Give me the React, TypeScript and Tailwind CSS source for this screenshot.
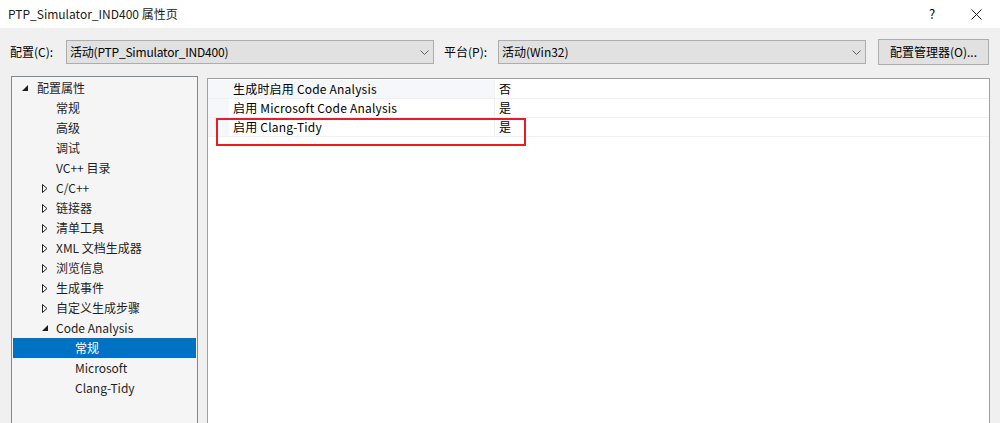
import React from "react";

const font = { fontFamily: '"Noto Sans CJK SC", "Noto Sans", sans-serif' };

function Expanded() {
  return (
    <svg width="7" height="7" viewBox="0 0 7 7" className="shrink-0">
      <polygon points="6,0 6,6 0,6" fill="#1e1e1e" />
    </svg>
  );
}
function Collapsed() {
  return (
    <svg width="6" height="9" viewBox="0 0 6 9" className="shrink-0">
      <polygon points="0.5,0.5 5,4.5 0.5,8.5" fill="none" stroke="#1e1e1e" strokeWidth="1" />
    </svg>
  );
}
function Chevron() {
  return (
    <svg width="9" height="5" viewBox="0 0 9 5">
      <polyline points="0.5,0.5 4.5,4.5 8.5,0.5" fill="none" stroke="#606060" strokeWidth="1" />
    </svg>
  );
}

type Node = { label: string; level: number; icon?: "e" | "c"; selected?: boolean };
const tree: Node[] = [
  { label: "配置属性", level: 0, icon: "e" },
  { label: "常规", level: 1 },
  { label: "高级", level: 1 },
  { label: "调试", level: 1 },
  { label: "VC++ 目录", level: 1 },
  { label: "C/C++", level: 1, icon: "c" },
  { label: "链接器", level: 1, icon: "c" },
  { label: "清单工具", level: 1, icon: "c" },
  { label: "XML 文档生成器", level: 1, icon: "c" },
  { label: "浏览信息", level: 1, icon: "c" },
  { label: "生成事件", level: 1, icon: "c" },
  { label: "自定义生成步骤", level: 1, icon: "c" },
  { label: "Code Analysis", level: 1, icon: "e" },
  { label: "常规", level: 2, selected: true },
  { label: "Microsoft", level: 2 },
  { label: "Clang-Tidy", level: 2 },
];

const rows = [
  { k: "生成时启用 Code Analysis", v: "否", hl: true },
  { k: "启用 Microsoft Code Analysis", v: "是" },
  { k: "启用 Clang-Tidy", v: "是" },
];

export default function App() {
  return (
    <div className="w-[1000px] h-[423px] overflow-hidden flex flex-col text-[12px] text-black bg-[#f0f0f0]" style={font}>
      {/* title bar */}
      <div className="h-[28px] bg-white flex items-center shrink-0">
        <div className="pl-[8px] text-[12px] leading-[14px] text-[#1a1a1a]">PTP_Simulator_IND400 属性页</div>
        <div className="ml-auto flex items-center">
          <div className="w-[12px] text-center text-[13px] leading-[14px] mr-[33px]">?</div>
          <svg width="11" height="11" viewBox="0 0 11 11" className="mr-[18px]">
            <path d="M0.5 0.5 L10.5 10.5 M10.5 0.5 L0.5 10.5" stroke="#1a1a1a" strokeWidth="1" />
          </svg>
        </div>
      </div>

      {/* config row */}
      <div className="flex items-center h-[26px] mt-[11px] shrink-0">
        <div className="pl-[10px] w-[66px] leading-[14px]">配置(C):</div>
        <div className="w-[368px] h-[24px] bg-[#e1e1e1] border border-[#adadad] flex items-center pl-[3px] pr-[4px]">
          <span className="leading-[14px] tracking-[-0.2px]">活动(PTP_Simulator_IND400)</span>
          <span className="ml-auto"><Chevron /></span>
        </div>
        <div className="pl-[10px] w-[64px] leading-[14px]">平台(P):</div>
        <div className="w-[368px] h-[24px] bg-[#e1e1e1] border border-[#adadad] flex items-center pl-[3px] pr-[4px]">
          <span className="leading-[14px]">活动(Win32)</span>
          <span className="ml-auto"><Chevron /></span>
        </div>
        <div className="ml-[12px] w-[111px] h-[26px] bg-[#e1e1e1] border border-[#adadad] flex items-center justify-center">
          <span className="leading-[14px]">配置管理器(O)...</span>
        </div>
      </div>

      {/* panels */}
      <div className="flex mt-[11px] flex-1 min-h-0">
        <div className="ml-[11px] w-[187px] h-[400px] border border-[#828790] bg-[#f5f5f5] p-[1px] shrink-0">
          {tree.map((n, i) => (
            <div
              key={i}
              className={
                "h-[20px] flex items-center " + (n.selected ? "bg-[#0072c6] text-white" : "text-[#1e1e1e]")
              }
            >
              <div
                className={
                  n.level === 0 ? "w-[24px] pl-[9px] flex items-center" : n.level === 1 ? "w-[43px] pl-[29px] flex items-center" : "w-[62px]"
                }
              >
                {n.icon === "e" ? <Expanded /> : n.icon === "c" ? <Collapsed /> : null}
              </div>
              <span className="leading-[14px] whitespace-nowrap">{n.label}</span>
            </div>
          ))}
        </div>

        <div className="ml-[9px] mt-[2px] w-[783px] h-[400px] border border-[#a0a0a0] bg-white relative shrink-0">
          <div className="pt-[1px]">
            {rows.map((r, i) => (
              <div key={i} className="h-[19px] flex border-b border-[#f0f0f0]">
                <div className="w-[21px] bg-[#f5f7fb]" />
                <div className={"w-[265px] flex items-center pl-[4px] " + (r.hl ? "bg-[#f5f7fb]" : "")}>
                  <span className="leading-[14px] tracking-[0.2px]">{r.k}</span>
                </div>
                <div className="flex-1 flex items-center pl-[4px] border-l border-[#f0f0f0]">
                  <span className="leading-[14px]">{r.v}</span>
                </div>
              </div>
            ))}
          </div>
          <div className="absolute left-[8px] top-[39px] w-[310px] h-[28px] border-2 border-[#e81c24]" />
        </div>
      </div>
    </div>
  );
}
